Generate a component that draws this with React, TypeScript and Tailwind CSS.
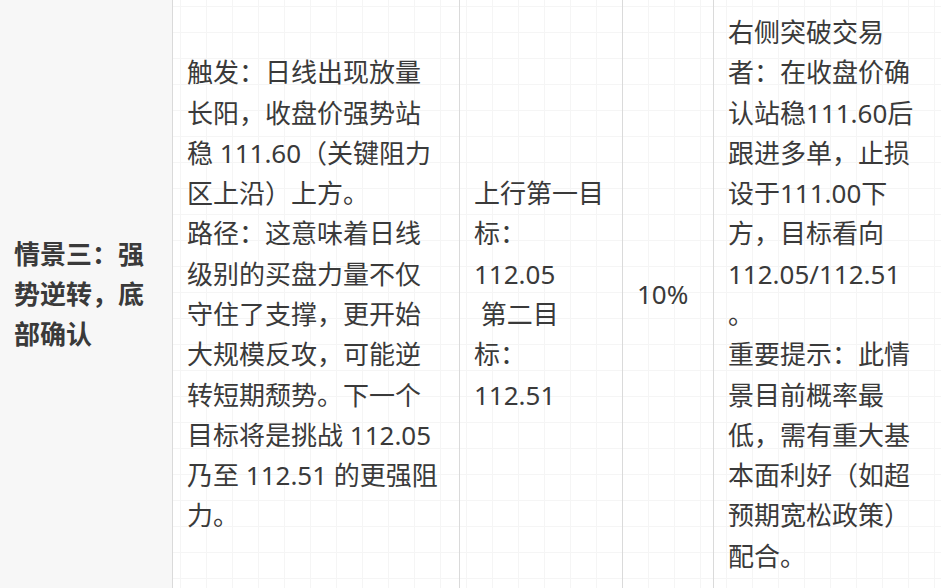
import React from 'react'

const font = { fontFamily: '"Noto Sans", "Noto Sans CJK SC", sans-serif' }

function Lines({ lines }: { lines: string[] }) {
    return (
        <>
            {lines.map((l, i) => (
                <div key={i} className="whitespace-nowrap">{l}</div>
            ))}
        </>
    )
}

const trigger = [
    '触发：日线出现放量',
    '长阳，收盘价强势站',
    '稳 111.60（关键阻力',
    '区上沿）上方。',
    '路径：这意味着日线',
    '级别的买盘力量不仅',
    '守住了支撑，更开始',
    '大规模反攻，可能逆',
    '转短期颓势。下一个',
    '目标将是挑战 112.05',
    '乃至 112.51 的更强阻',
    '力。',
]

const target = ['上行第一目', '标：', '112.05', '\u00a0第二目', '标：', '112.51']

const advice = [
    '右侧突破交易',
    '者：在收盘价确',
    '认站稳111.60后',
    '跟进多单，止损',
    '设于111.00下',
    '方，目标看向',
    '112.05/112.51',
    '。',
    '重要提示：此情',
    '景目前概率最',
    '低，需有重大基',
    '本面利好（如超',
    '预期宽松政策）',
    '配合。',
]

export default function App() {
    return (
        <div
            className="h-[588px] w-[941px] overflow-hidden bg-white bg-[linear-gradient(to_right,#f5f5f5_1px,transparent_1px),linear-gradient(to_bottom,#f5f5f5_1px,transparent_1px)] bg-[size:26px_26px] bg-[position:24px_6px] text-[26px] leading-[40.3px] text-[#3a3a3a]"
            style={font}
        >
            <div className="flex h-[588px]">
                <div className="flex w-[172px] shrink-0 flex-col justify-center bg-[#f7f7f7] px-[14px] font-bold">
                    <div>情景三：强</div>
                    <div>势逆转，底</div>
                    <div>部确认</div>
                </div>
                <div className="flex w-[287px] shrink-0 flex-col justify-center border-l border-[#dadada] px-[14px]">
                    <Lines lines={trigger} />
                </div>
                <div className="flex w-[163px] shrink-0 flex-col justify-center border-l border-[#dadada] px-[14px]">
                    <Lines lines={target} />
                </div>
                <div className="flex w-[91px] shrink-0 flex-col justify-center border-l border-[#dadada] px-[14px]">
                    <div>10%</div>
                </div>
                <div className="flex flex-1 flex-col justify-center border-l border-[#dadada] px-[14px]">
                    <Lines lines={advice} />
                </div>
            </div>
        </div>
    )
}
